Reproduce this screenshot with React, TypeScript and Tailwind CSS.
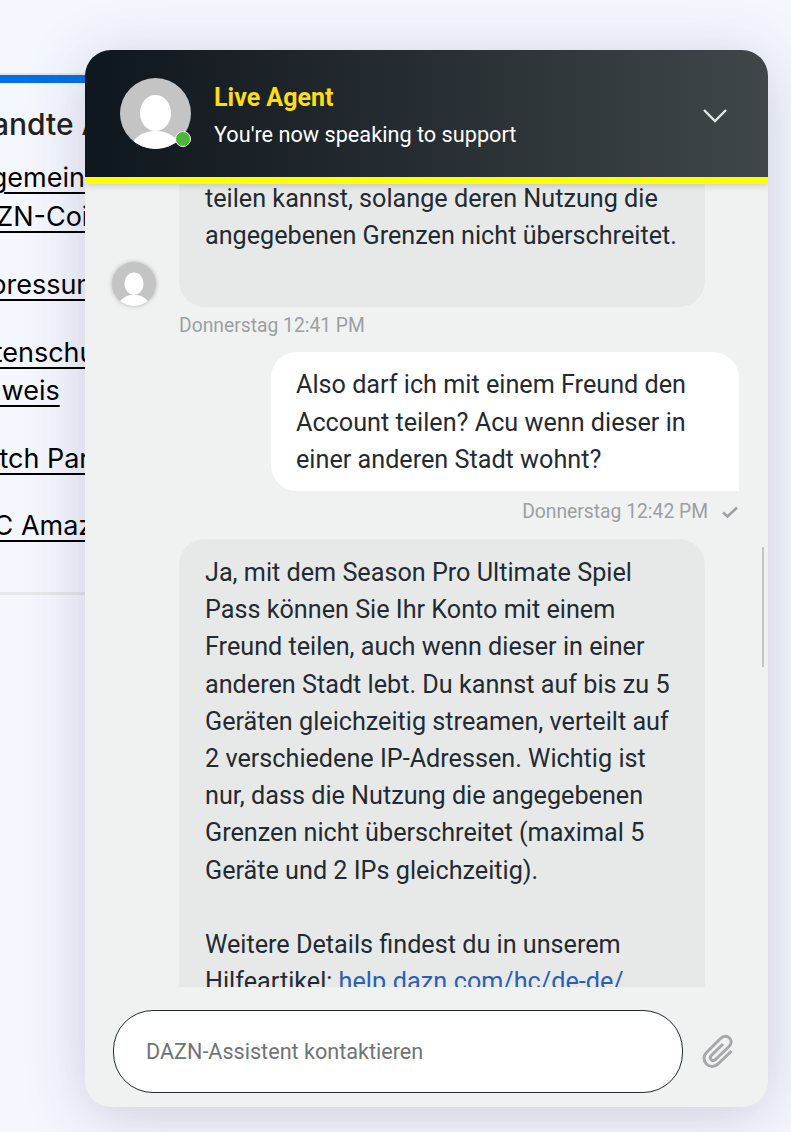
import React from 'react';

const relatedLinks = [
  { lines: ['Allgemeine', 'DAZN-Coins'], gap: 'mt-0' },
  { lines: ['Impressum'], gap: 'mt-[30px]' },
  { lines: ['Datenschutz', 'Hinweis'], gap: 'mt-[29px]' },
  { lines: ['Watch Party'], gap: 'mt-[29px]' },
  { lines: ['AFC Amazon'], gap: 'mt-[29px]' },
];

const Avatar = ({ className }: { className: string }) => (
  <svg viewBox="0 0 71 71" className={className}>
    <defs>
      <clipPath id="avatar-clip">
        <circle cx="35.5" cy="35.5" r="35.5" />
      </clipPath>
    </defs>
    <circle cx="35.5" cy="35.5" r="35.5" fill="#c4c4c4" />
    <g clipPath="url(#avatar-clip)" fill="#fff">
      <ellipse cx="35.5" cy="35" rx="15.5" ry="18" />
      <ellipse cx="35.5" cy="70" rx="24" ry="17" />
    </g>
  </svg>
);

export default function App() {
  return (
    <div className="relative h-[1132px] w-[791px] overflow-hidden bg-[#f5f7ff] font-['Inter',sans-serif]">
      {/* Page behind the chat */}
      <div className="w-[400px] pt-[73px] text-black">
        <div className="h-[2px] bg-[#e6e6e0]" />
        <div className="h-2 bg-[#0070e8]" />
        <h2 className="ml-[-82px] mt-[21px] whitespace-nowrap text-[30px] font-medium leading-[40px] text-[#222]">Verwandte Artikel</h2>
        <div className="ml-[-41px] mt-[15px] text-[27px] leading-[38.5px]">
          {relatedLinks.map((link) => (
            <div key={link.lines[0]} className={link.gap}>
              {link.lines.map((line) => (
                <div key={line} className="whitespace-nowrap">
                  <span className="underline decoration-2 underline-offset-[5px]">{line}</span>
                </div>
              ))}
            </div>
          ))}
        </div>
        <div className="mt-[46px] h-[3px] bg-[#e6e7e8]" />
      </div>

      {/* Chat widget */}
      <div className="absolute left-[85px] top-[50px] flex h-[1057px] w-[683px] flex-col overflow-hidden rounded-[26px] bg-[#f0f2f2] font-['Roboto',sans-serif] shadow-[0_8px_60px_rgba(50,50,90,0.22)]">
        <header className="relative z-10 flex h-[134px] shrink-0 items-center border-b-[7px] border-[#ffff00] bg-gradient-to-r from-[#0f171e] to-[#404749] pl-[35px] pr-[40px] shadow-[0_2px_6px_rgba(0,0,0,0.15)]">
          <div className="relative h-[71px] w-[71px] shrink-0">
            <Avatar className="h-[71px] w-[71px]" />
            <span className="absolute bottom-[2px] right-0 h-[16px] w-[16px] rounded-full border border-white bg-[#4db53c]" />
          </div>
          <div className="ml-[23px] mt-[5px] flex-1">
            <div className="text-[25px] font-bold leading-[32px] text-[#ffdd15]">Live Agent</div>
            <div className="mt-[6px] text-[21.7px] leading-[30px] text-white">You're now speaking to support</div>
          </div>
          <svg viewBox="0 0 26 16" className="mt-[4px] h-4 w-[26px] fill-none stroke-[#e4e6e6] stroke-[2.4]">
            <path d="M2 2l11 11L24 2" />
          </svg>
        </header>

        <div className="relative flex-1 overflow-hidden">
          <div className="pl-[27px] pr-[29px] text-[25.2px] leading-[37.2px] text-[#232a31]">
            <div className="flex items-end">
              <Avatar className="mb-[1px] h-[44px] w-[44px] shrink-0 drop-shadow-[0_0_2px_rgba(0,0,0,0.25)]" />
              <div className="ml-[23px] mt-[-4px] w-[526px] rounded-b-[26px] bg-[#e7e9e9] pb-[53px] pl-[26px] pr-[20px]">
                teilen kannst, solange deren Nutzung die angegebenen Grenzen nicht überschreitet.
              </div>
            </div>
            <div className="ml-[67px] mt-[7px] text-[19.3px] leading-[24px] text-[#9b9fa2]">Donnerstag 12:41 PM</div>

            <div className="ml-auto mt-[14px] w-[468px] rounded-[26px] rounded-br-none bg-white pb-[13px] pl-[25px] pr-[30px] pt-[14px]">
              Also darf ich mit einem Freund den Account teilen? Acu wenn dieser in einer anderen Stadt wohnt?
            </div>
            <div className="mt-[9px] flex items-center justify-end text-[19.3px] leading-[24px] text-[#9b9fa2]">
              <span>Donnerstag 12:42 PM</span>
              <svg viewBox="0 0 16 12" className="ml-[14px] mr-[1px] h-3 w-4 fill-none stroke-[#9b9fa2] stroke-[2.5]">
                <path d="M1 6.5l4.5 4L15 1.5" />
              </svg>
            </div>

            <div className="ml-[67px] mt-[15px] w-[526px] rounded-t-[26px] bg-[#e7e9e9] pb-[14px] pl-[26px] pr-[31px] pt-[15px]">
              <p>
                Ja, mit dem Season Pro Ultimate Spiel Pass können Sie Ihr Konto mit einem Freund teilen, auch wenn dieser in einer anderen Stadt lebt. Du kannst auf bis zu 5 Geräten gleichzeitig streamen, verteilt auf 2 verschiedene IP-Adressen. Wichtig ist nur, dass die Nutzung die angegebenen Grenzen nicht überschreitet (maximal 5 Geräte und 2 IPs gleichzeitig).
              </p>
              <p className="mt-[37px]">
                Weitere Details findest du in unserem Hilfeartikel: <span className="text-[#2a5fb5]">help.dazn.com/hc/de-de/</span>
              </p>
            </div>
          </div>
          <div className="absolute right-[4px] top-[363px] h-[120px] w-[2px] bg-[#c3c5c5]" />
        </div>

        <footer className="flex h-[120px] shrink-0 items-center pl-[28px] pr-[34px] pt-[8px]">
          <input
            type="text"
            placeholder="DAZN-Assistent kontaktieren"
            className="h-[83px] w-[570px] shrink-0 rounded-[40px] border border-[#232a31] bg-white pl-[32px] pr-4 text-[21.6px] text-[#232a31] outline-none placeholder:text-[#6f7478]"
          />
          <svg viewBox="0 0 32 34" className="ml-[19px] h-[34px] w-[32px] fill-none stroke-[#a6a8a9] stroke-[3]">
            <path d="M29.5 17 16 30C12 33.5 7.5 33 4.5 30 1.5 27 1 22 4.5 18.5L18.5 4.5C21.5 1.5 25 1.5 27.5 4 30 6.5 29.5 10 27 12.5L13.5 25.5C12 27 10.3 26.8 9.2 25.7 8 24.5 8 22.8 9.5 21.3L21 10" />
          </svg>
        </footer>
      </div>
    </div>
  );
}
